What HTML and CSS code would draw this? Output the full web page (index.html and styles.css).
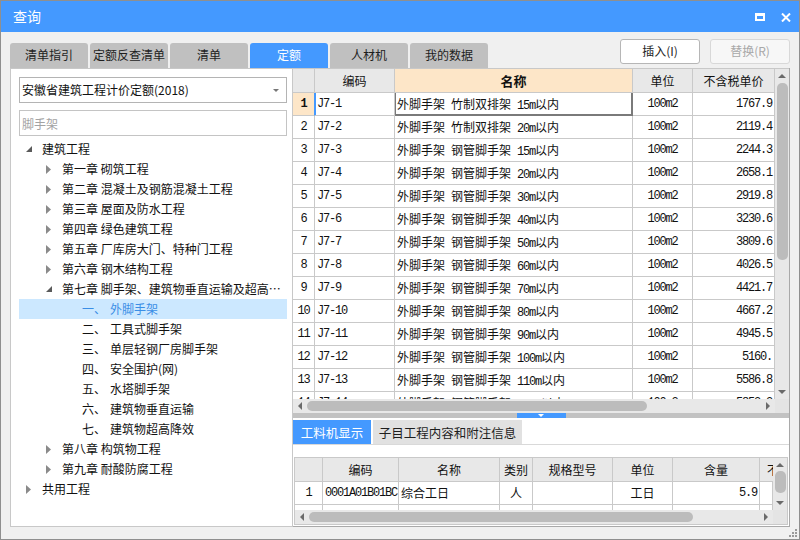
FILE: index.html
```html
<!DOCTYPE html>
<html lang="zh-CN">
<head>
<meta charset="utf-8">
<title>查询</title>
<link rel="stylesheet" href="styles.css">
</head>
<body>
<div class="win">
  <div class="title">
    <span class="tt">查询</span>
    <div class="ctl">
      <svg width="10" height="8" viewBox="0 0 10 8"><path d="M0 0H10V8H0Z M2 3V6H8V3Z" fill="#fff" fill-rule="evenodd"/></svg>
      <svg width="10" height="9" viewBox="0 0 10 9"><path d="M1 0.5L9 8.5M9 0.5L1 8.5" stroke="#fff" stroke-width="2"/></svg>
    </div>
  </div>
  <div class="body">
    <div class="toprow">
      <div class="tabs">
        <div class="tab">清单指引</div>
        <div class="tab">定额反查清单</div>
        <div class="tab">清单</div>
        <div class="tab on">定额</div>
        <div class="tab">人材机</div>
        <div class="tab">我的数据</div>
      </div>
      <div class="btns">
        <button class="btn">插入(I)</button>
        <button class="btn dis">替换(R)</button>
      </div>
    </div>
    <div class="content">
      <div class="left">
        <div class="sel"><span>安徽省建筑工程计价定额(2018)</span><i class="dd"></i></div>
        <input class="search" type="text" placeholder="脚手架">
        <ul class="tree">
          <li class="row l0"><span class="ar"><svg width="6" height="6" viewBox="0 0 6 6"><path d="M6 0V6H0Z" fill="#5a5a5a"/></svg></span><span class="txt">建筑工程</span></li>
          <li class="row l1"><span class="ar"><svg width="5" height="9" viewBox="0 0 5 9"><path d="M0 0L5 4.5L0 9Z" fill="#8a8a8a"/></svg></span><span class="txt">第一章 砌筑工程</span></li>
          <li class="row l1"><span class="ar"><svg width="5" height="9" viewBox="0 0 5 9"><path d="M0 0L5 4.5L0 9Z" fill="#8a8a8a"/></svg></span><span class="txt">第二章 混凝土及钢筋混凝土工程</span></li>
          <li class="row l1"><span class="ar"><svg width="5" height="9" viewBox="0 0 5 9"><path d="M0 0L5 4.5L0 9Z" fill="#8a8a8a"/></svg></span><span class="txt">第三章 屋面及防水工程</span></li>
          <li class="row l1"><span class="ar"><svg width="5" height="9" viewBox="0 0 5 9"><path d="M0 0L5 4.5L0 9Z" fill="#8a8a8a"/></svg></span><span class="txt">第四章 绿色建筑工程</span></li>
          <li class="row l1"><span class="ar"><svg width="5" height="9" viewBox="0 0 5 9"><path d="M0 0L5 4.5L0 9Z" fill="#8a8a8a"/></svg></span><span class="txt">第五章 厂库房大门、特种门工程</span></li>
          <li class="row l1"><span class="ar"><svg width="5" height="9" viewBox="0 0 5 9"><path d="M0 0L5 4.5L0 9Z" fill="#8a8a8a"/></svg></span><span class="txt">第六章 钢木结构工程</span></li>
          <li class="row l1"><span class="ar"><svg width="6" height="6" viewBox="0 0 6 6"><path d="M6 0V6H0Z" fill="#5a5a5a"/></svg></span><span class="txt">第七章 脚手架、建筑物垂直运输及超高降效</span></li>
          <li class="row l2 act"><span class="no">一、</span><span class="txt">外脚手架</span></li>
          <li class="row l2"><span class="no">二、</span><span class="txt">工具式脚手架</span></li>
          <li class="row l2"><span class="no">三、</span><span class="txt">单层轻钢厂房脚手架</span></li>
          <li class="row l2"><span class="no">四、</span><span class="txt">安全围护(网)</span></li>
          <li class="row l2"><span class="no">五、</span><span class="txt">水塔脚手架</span></li>
          <li class="row l2"><span class="no">六、</span><span class="txt">建筑物垂直运输</span></li>
          <li class="row l2"><span class="no">七、</span><span class="txt">建筑物超高降效</span></li>
          <li class="row l1"><span class="ar"><svg width="5" height="9" viewBox="0 0 5 9"><path d="M0 0L5 4.5L0 9Z" fill="#8a8a8a"/></svg></span><span class="txt">第八章 构筑物工程</span></li>
          <li class="row l1"><span class="ar"><svg width="5" height="9" viewBox="0 0 5 9"><path d="M0 0L5 4.5L0 9Z" fill="#8a8a8a"/></svg></span><span class="txt">第九章 耐酸防腐工程</span></li>
          <li class="row l0"><span class="ar"><svg width="5" height="9" viewBox="0 0 5 9"><path d="M0 0L5 4.5L0 9Z" fill="#8a8a8a"/></svg></span><span class="txt">共用工程</span></li>
        </ul>
      </div>
      <div class="right">
        <div class="g1">
          <div class="g1m">
            <div class="r hd">
              <div class="c"></div>
              <div class="c ctr">编码</div>
              <div class="c ctr nm">名称</div>
              <div class="c ctr">单位</div>
              <div class="c ctr">不含税单价</div>
            </div>
            <div class="vp">
              <div class="r r1"><div class="c ctr n num">1</div><div class="c n code">J7-1</div><div class="c cur">外脚手架<span class="n"> </span>竹制双排架<span class="n"> 15m</span>以内</div><div class="c ctr n">100m2</div><div class="c rt n">1767.9</div></div>
              <div class="r"><div class="c ctr n">2</div><div class="c n">J7-2</div><div class="c">外脚手架<span class="n"> </span>竹制双排架<span class="n"> 20m</span>以内</div><div class="c ctr n">100m2</div><div class="c rt n">2119.4</div></div>
              <div class="r"><div class="c ctr n">3</div><div class="c n">J7-3</div><div class="c">外脚手架<span class="n"> </span>钢管脚手架<span class="n"> 15m</span>以内</div><div class="c ctr n">100m2</div><div class="c rt n">2244.3</div></div>
              <div class="r"><div class="c ctr n">4</div><div class="c n">J7-4</div><div class="c">外脚手架<span class="n"> </span>钢管脚手架<span class="n"> 20m</span>以内</div><div class="c ctr n">100m2</div><div class="c rt n">2658.1</div></div>
              <div class="r"><div class="c ctr n">5</div><div class="c n">J7-5</div><div class="c">外脚手架<span class="n"> </span>钢管脚手架<span class="n"> 30m</span>以内</div><div class="c ctr n">100m2</div><div class="c rt n">2919.8</div></div>
              <div class="r"><div class="c ctr n">6</div><div class="c n">J7-6</div><div class="c">外脚手架<span class="n"> </span>钢管脚手架<span class="n"> 40m</span>以内</div><div class="c ctr n">100m2</div><div class="c rt n">3230.6</div></div>
              <div class="r"><div class="c ctr n">7</div><div class="c n">J7-7</div><div class="c">外脚手架<span class="n"> </span>钢管脚手架<span class="n"> 50m</span>以内</div><div class="c ctr n">100m2</div><div class="c rt n">3809.6</div></div>
              <div class="r"><div class="c ctr n">8</div><div class="c n">J7-8</div><div class="c">外脚手架<span class="n"> </span>钢管脚手架<span class="n"> 60m</span>以内</div><div class="c ctr n">100m2</div><div class="c rt n">4026.5</div></div>
              <div class="r"><div class="c ctr n">9</div><div class="c n">J7-9</div><div class="c">外脚手架<span class="n"> </span>钢管脚手架<span class="n"> 70m</span>以内</div><div class="c ctr n">100m2</div><div class="c rt n">4421.7</div></div>
              <div class="r"><div class="c ctr n">10</div><div class="c n">J7-10</div><div class="c">外脚手架<span class="n"> </span>钢管脚手架<span class="n"> 80m</span>以内</div><div class="c ctr n">100m2</div><div class="c rt n">4667.2</div></div>
              <div class="r"><div class="c ctr n">11</div><div class="c n">J7-11</div><div class="c">外脚手架<span class="n"> </span>钢管脚手架<span class="n"> 90m</span>以内</div><div class="c ctr n">100m2</div><div class="c rt n">4945.5</div></div>
              <div class="r"><div class="c ctr n">12</div><div class="c n">J7-12</div><div class="c">外脚手架<span class="n"> </span>钢管脚手架<span class="n"> 100m</span>以内</div><div class="c ctr n">100m2</div><div class="c rt n">5160.</div></div>
              <div class="r"><div class="c ctr n">13</div><div class="c n">J7-13</div><div class="c">外脚手架<span class="n"> </span>钢管脚手架<span class="n"> 110m</span>以内</div><div class="c ctr n">100m2</div><div class="c rt n">5586.8</div></div>
              <div class="r"><div class="c ctr n">14</div><div class="c n">J7-14</div><div class="c">外脚手架<span class="n"> </span>钢管脚手架<span class="n"> 120m</span>以内</div><div class="c ctr n">100m2</div><div class="c rt n">5853.2</div></div>
            </div>
            <div class="hs">
              <div class="ab"><i class="al"></i></div>
              <div class="ht" style="width:340px"></div>
              <div class="ab end"><i class="arr"></i></div>
            </div>
          </div>
          <div class="vs">
            <div class="vtrack">
              <div class="vb"><i class="au"></i></div>
              <div class="vt" style="height:177px"></div>
              <div class="vb end"><i class="ad"></i></div>
            </div>
            <div class="corner"></div>
          </div>
        </div>
        <div class="split"><div class="sb"><i></i></div></div>
        <div class="bot">
          <div class="btabs">
            <div class="bt on">工料机显示</div>
            <div class="bt">子目工程内容和附注信息</div>
          </div>
          <div class="g2">
            <div class="g2m">
              <div class="r2 hd">
                <div class="c"></div>
                <div class="c ctr">编码</div>
                <div class="c ctr">名称</div>
                <div class="c ctr">类别</div>
                <div class="c ctr">规格型号</div>
                <div class="c ctr">单位</div>
                <div class="c ctr">含量</div>
                <div class="c cut">不含</div>
              </div>
              <div class="vp2">
                <div class="r2"><div class="c ctr n">1</div><div class="c n">0001A01B01BC</div><div class="c">综合工日</div><div class="c ctr">人</div><div class="c"></div><div class="c ctr">工日</div><div class="c rt n">5.9</div><div class="c"></div></div>
                <div class="r2"><div class="c"></div><div class="c"></div><div class="c"></div><div class="c"></div><div class="c"></div><div class="c"></div><div class="c"></div><div class="c"></div></div>
              </div>
              <div class="hs hs2">
                <div class="ab"><i class="al"></i></div>
                <div class="ht" style="width:384px"></div>
                <div class="ab end"><i class="arr"></i></div>
              </div>
            </div>
            <div class="vs vs2">
              <div class="vtrack">
                <div class="vb"><i class="au"></i></div>
                <div class="vt" style="height:22px"></div>
                <div class="vb end"><i class="ad"></i></div>
              </div>
              <div class="corner"></div>
            </div>
          </div>
        </div>
      </div>
    </div>
  </div>
  <svg class="grip" width="8" height="8" viewBox="0 0 8 8"><g fill="#9a9a9a"><rect x="6" y="0" width="2" height="2"/><rect x="3" y="3" width="2" height="2"/><rect x="6" y="3" width="2" height="2"/><rect x="0" y="6" width="2" height="2"/><rect x="3" y="6" width="2" height="2"/><rect x="6" y="6" width="2" height="2"/></g></svg>
</div>
</body>
</html>
```
FILE: styles.css
```css
* { box-sizing: border-box; margin: 0; padding: 0; }
html, body { width: 800px; height: 540px; overflow: hidden; background: #f0f0f0; }
body { font: 12px/1.2 "Noto Sans CJK SC", "Noto Sans", sans-serif; color: #111; }

.win { width: 800px; height: 540px; border: 1px solid #8f8f8f; display: flex; flex-direction: column; background: #f0f0f0; position: relative; }

.title { height: 31px; flex: none; background: #4499ff; color: #fff; display: flex; align-items: center; padding: 0 8px 0 12px; font-size: 14px; }
.title .tt { flex: 1; }
.ctl { display: flex; align-items: center; gap: 16px; padding-top: 1px; }
.ctl svg { display: block; }

.body { flex: 1; min-height: 0; display: flex; flex-direction: column; padding: 0 9px 12px 9px; }

.toprow { height: 36px; flex: none; display: flex; }
.tabs { display: flex; gap: 2px; align-self: flex-end; }
.tab { width: 78px; height: 25px; background: #c0c0c0; border-radius: 3px 3px 0 0; display: flex; align-items: center; justify-content: center; color: #1e1e1e; }
.tab.on { background: #4499ff; color: #fff; }
.btns { margin-left: auto; display: flex; gap: 10px; padding-top: 7px; }
.btn { width: 80px; height: 25px; border: 1px solid #b6b6b6; border-radius: 3px; background: #fff; font: inherit; color: #1e1e1e; display: flex; align-items: center; justify-content: center; }
.btn.dis { color: #a8a8a8; border-color: #d8d8d8; background: #f7f7f7; }

.content { height: 459px; flex: none; display: flex; }

.left { width: 283px; flex: none; background: #fff; border: 1px solid #c8c8c8; padding: 8px 5px 0 8px; display: flex; flex-direction: column; }
.sel { height: 26px; flex: none; border: 1px solid #b4b4b4; display: flex; align-items: center; padding: 0 7px 0 2px; background: #fff; }
.sel span { flex: 1; }
.dd { width: 0; height: 0; border-left: 3px solid transparent; border-right: 3px solid transparent; border-top: 3px solid #777; }
.search { height: 26px; flex: none; margin-top: 7px; border: 1px solid #c4c4c4; padding: 0 2px; font: inherit; color: #111; outline: none; width: 100%; }
.search::placeholder { color: #a3a3a3; }

.tree { list-style: none; margin-top: 3px; }
.row { height: 20px; line-height: 20px; display: flex; align-items: center; white-space: nowrap; }
.l0 { padding-left: 7px; }
.l1 { padding-left: 27px; }
.l2 { padding-left: 63px; }
.ar { width: 16px; height: 20px; flex: none; display: flex; align-items: center; }
.ar svg { display: block; }
.no { width: 28px; flex: none; }
.txt { min-width: 0; overflow: hidden; text-overflow: ellipsis; padding-right: 6px; }
.row.act { background: #cce8ff; color: #3a8ee6; }

.right { flex: 1; min-width: 0; display: flex; flex-direction: column; border-right: 1px solid #a9a9a9; background: #fff; }

.g1 { height: 345px; flex: none; display: flex; border-top: 1px solid #c8c8c8; }
.g1m { width: 482px; flex: none; display: flex; flex-direction: column; }
.r { display: grid; grid-template-columns: 22px 80px 238px 60px 82px; height: 23px; flex: none; }
.r.hd { height: 24px; background: #e8e8e8; }
.c { border-right: 1px solid #c9c9c9; border-bottom: 1px solid #c9c9c9; display: block; line-height: 22px; overflow: hidden; white-space: nowrap; padding: 0 1px 0 2px; min-width: 0; text-align: left; }
.hd .c { line-height: 23px; }
.ctr { text-align: center; padding: 0; }
.rt { text-align: right; padding: 0 2px 0 0; }
.nm { background: #fde6c8; font-weight: bold; font-size: 13px; }
.n { font-family: "Liberation Mono", "DejaVu Sans Mono", monospace; font-size: 12px; letter-spacing: -1.2px; }
.r1 .num { background: #fde6c8; font-weight: bold; border-right-color: #4499ff; }
.r1 .code { box-shadow: inset 1px 0 0 #4499ff; }
.cur { border-right-color: #7a7a7a; border-bottom-color: #7a7a7a; box-shadow: inset 1px 0 0 #7a7a7a, inset -1px -1px 0 #7a7a7a; }

.vp { height: 306px; flex: none; overflow: hidden; }

.hs { height: 14px; flex: none; background: #e8e8e8; display: flex; align-items: center; }
.ab { width: 14px; height: 14px; flex: none; display: flex; align-items: center; justify-content: center; }
.ab.end { margin-left: auto; }
.al { width: 0; height: 0; border-right: 4px solid #6a6a6a; border-top: 4px solid transparent; border-bottom: 4px solid transparent; }
.arr { width: 0; height: 0; border-left: 4px solid #6a6a6a; border-top: 4px solid transparent; border-bottom: 4px solid transparent; }
.ht { height: 10px; background: #bcbcbc; border-radius: 5px; }

.vs { width: 14px; flex: none; display: flex; flex-direction: column; }
.vtrack { flex: 1; background: #e8e8e8; display: flex; flex-direction: column; align-items: center; }
.vb { height: 14px; width: 14px; flex: none; display: flex; align-items: center; justify-content: center; }
.vb.end { margin-top: auto; }
.au { width: 0; height: 0; border-bottom: 4px solid #6a6a6a; border-left: 4px solid transparent; border-right: 4px solid transparent; }
.ad { width: 0; height: 0; border-top: 4px solid #6a6a6a; border-left: 4px solid transparent; border-right: 4px solid transparent; }
.vt { width: 11px; background: #bcbcbc; border-radius: 5px; }
.corner { height: 14px; flex: none; background: #e4e4e4; }

.split { height: 5px; flex: none; background: #c2c2c2; display: flex; justify-content: center; }
.sb { width: 49px; background: #4499ff; display: flex; justify-content: center; align-items: flex-start; padding-top: 1px; }
.sb i { width: 0; height: 0; border-top: 3px solid #fff; border-left: 3px solid transparent; border-right: 3px solid transparent; }

.bot { flex: 1; min-height: 0; display: flex; flex-direction: column; border-bottom: 1px solid #a9a9a9; }
.btabs { height: 27px; flex: none; display: flex; gap: 2px; padding-top: 2px; border-bottom: 1px solid #d9d9d9; }
.bt { height: 24px; width: 149px; background: #e1e1e1; display: flex; align-items: center; justify-content: center; color: #1e1e1e; font-size: 12.5px; }
.bt.on { width: 78px; background: #4499ff; color: #fff; }

.g2 { height: 68px; flex: none; margin: 12px 1px 0 1px; border: 1px solid #c9c9c9; display: flex; }
.g2m { width: 478px; flex: none; display: flex; flex-direction: column; }
.r2 { display: grid; grid-template-columns: 28px 76px 101px 33px 80px 60px 87px 13px; height: 23px; flex: none; }
.r2.hd { height: 24px; background: #e8e8e8; }
.cut { padding: 0 0 0 7px; border-right: none; }
.vp2 { height: 28px; flex: none; overflow: hidden; }
.vs2 .vb { height: 13px; }
.vs2 .vb.end { height: 14px; }

.grip { position: absolute; right: 2px; bottom: 2px; }
```
